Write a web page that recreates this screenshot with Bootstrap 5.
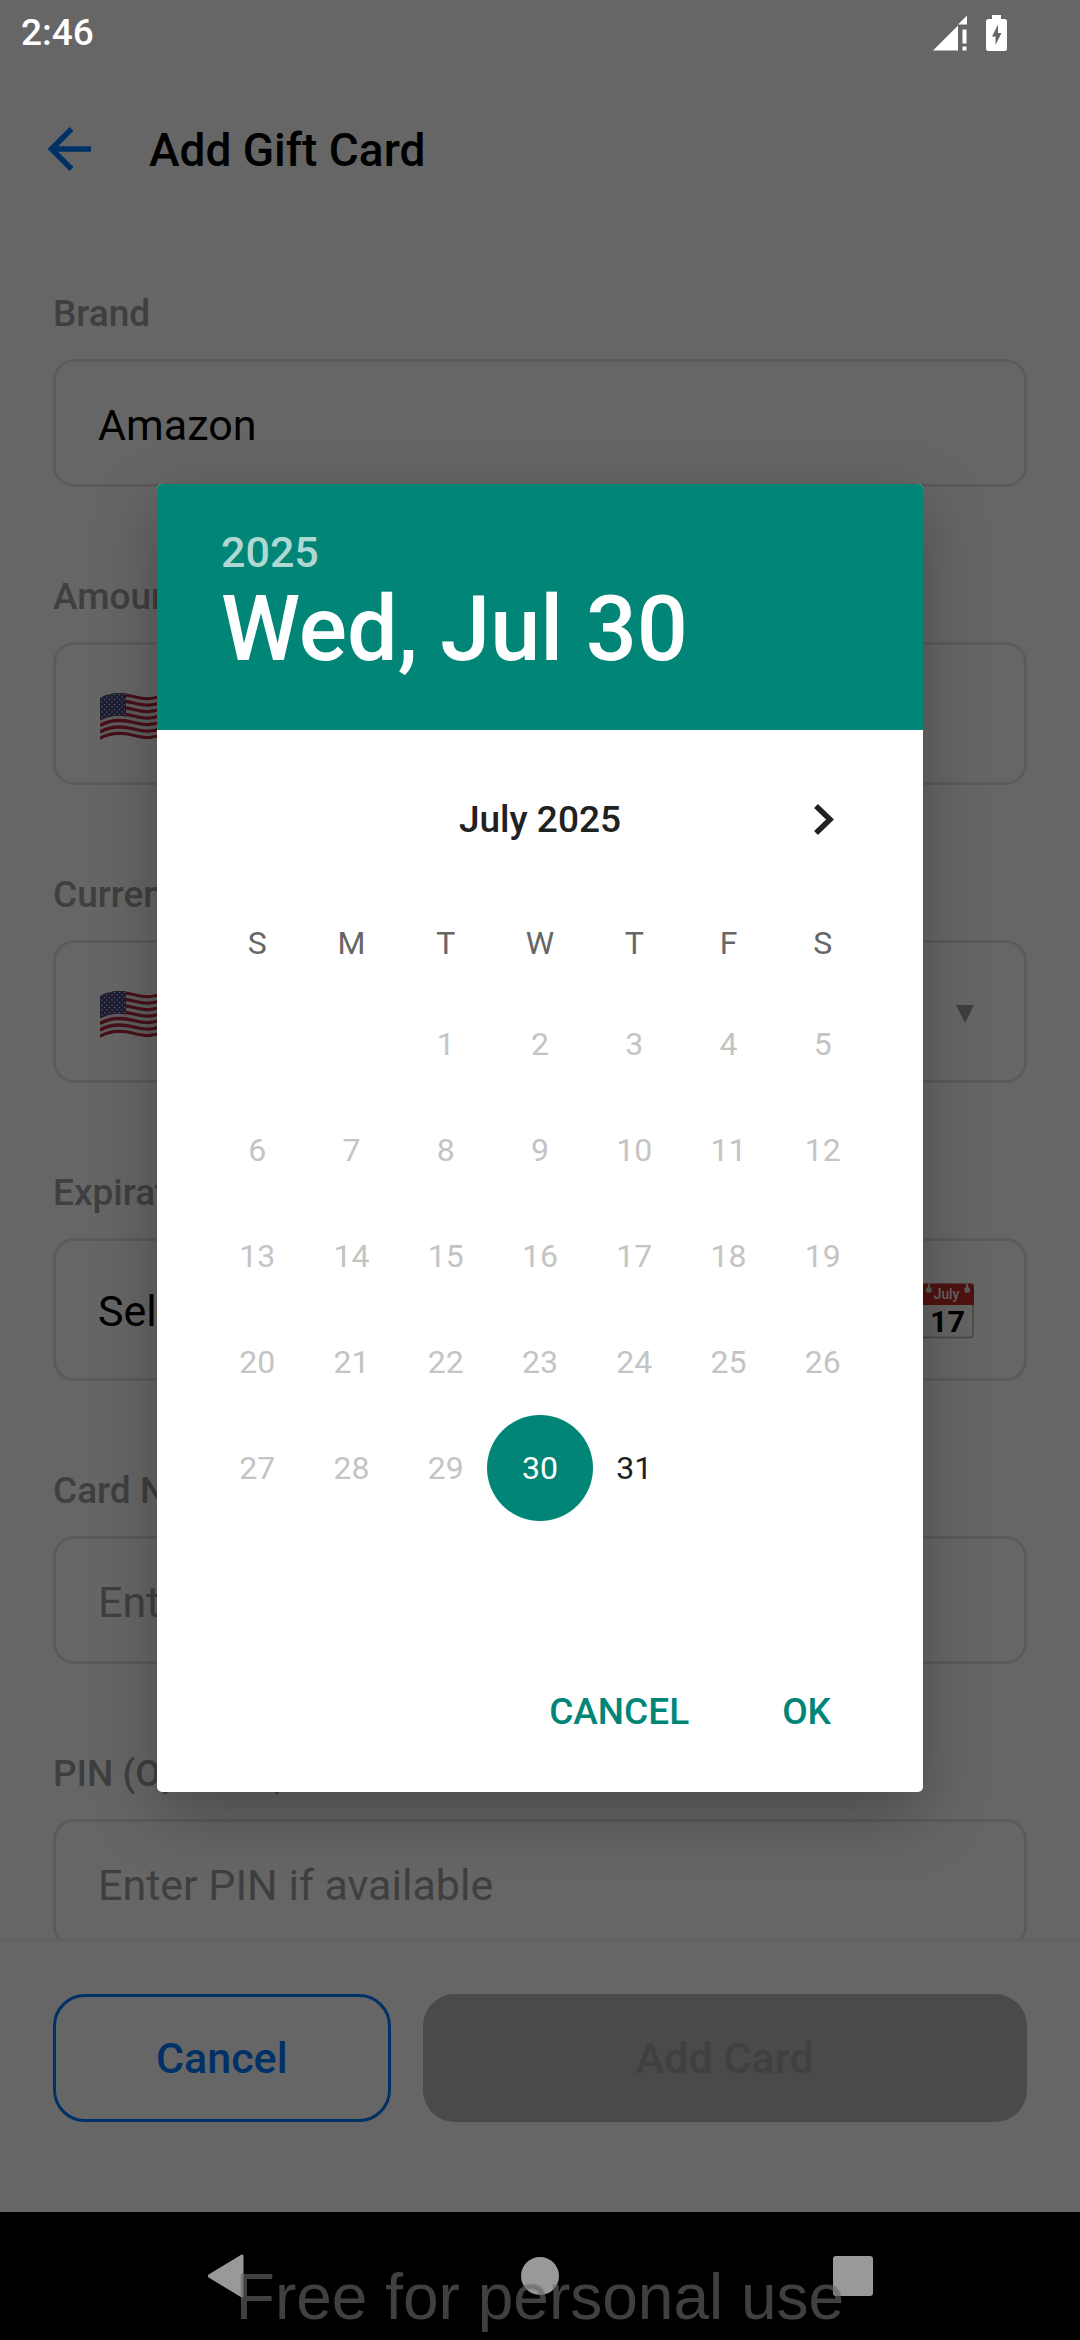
<!DOCTYPE html>
<html lang="en">
<head>
<meta charset="utf-8">
<meta name="viewport" content="width=device-width, initial-scale=1">
<title>Add Gift Card</title>
<link href="https://cdn.jsdelivr.net/npm/bootstrap@5.3.0/dist/css/bootstrap.min.css" rel="stylesheet">
<style>
  :root { --teal: #008577; --ink: #212121; --blue: #007aff; --muted: #9e9e9e; --line: #e4e4e4; }
  body { font-family: Roboto, "Noto Sans", sans-serif; color: #000; background: #fff; }
  button { font-family: inherit; }
  .screen { height: 100vh; }
  .fw-mid { font-weight: 500; }

  .status-bar { height: 66px; padding: 0 73px 0 21px; z-index: 3; font-size: 37px; line-height: 44px; }
  .status-icons { gap: 19px; }
  .top-bar { height: 168px; padding: 0 48px; gap: 58px; }
  .top-bar h1 { font-size: 46px; line-height: 56px; }

  .form-area { flex: 1 1 0; min-height: 0; padding: 56px 53px 0; }
  .field { margin-bottom: 86px; }
  .field > label { display: block; font-size: 37px; line-height: 48px; margin-bottom: 21px; color: var(--muted); font-weight: 500; }
  .box { height: 128px; border: 3px solid var(--line); border-radius: 21px; padding: 3px 42px 0; font-size: 43px; line-height: 50px; background: #fff; color: #000; }
  .box-tall { height: 143px; }
  .box input, .box select { border: 0; outline: 0; padding: 0; background: none; appearance: none; color: #000; font-size: 43px; }
  input.box::placeholder, .box input::placeholder { color: var(--muted); opacity: 1; }

  .action-bar { border-top: 3px solid #f2f2f2; padding: 52px 53px 90px; gap: 32px; }
  .action { height: 128px; border-radius: 32px; font-size: 43px; line-height: 50px; font-weight: 500; padding: 0; }
  .action-cancel { flex: 333 1 0; border: 3px solid var(--blue); color: var(--blue); }
  .action-add, .action-add:disabled { flex: 607 1 0; border: 0; background: #b4b8bd; color: #a0a0a3; opacity: 1; }

  .system-nav { height: 128px; background: #000; padding: 0 70px; z-index: 3; }
  .system-nav .key { flex: 1 1 0; background: none; border: 0; padding: 0; }
  .watermark { bottom: 3px; font-family: "Liberation Sans", sans-serif; font-size: 64px; line-height: 80px; color: rgba(128,128,128,.5); pointer-events: none; text-shadow: 0 0 2px rgba(0,0,0,.3); }

  .scrim { background: rgba(0,0,0,.6); padding: 64px 0 128px; z-index: 2; }
  .picker { width: 766px; max-width: 90%; border-radius: 5px; background: #fff; box-shadow: 0 22px 66px rgba(0,0,0,.28); }
  .picker-head { background: var(--teal); color: #fff; padding: 44px 64px 48px; }
  .picker-year { font-size: 43px; line-height: 49px; color: rgba(255,255,255,.7); }
  .picker-date { font-size: 90px; line-height: 105px; }
  .picker-body { padding: 27px 53px 0; }
  .month-row { height: 126px; margin-bottom: 13px; color: var(--ink); font-size: 37px; line-height: 44px; }
  .next-month { right: 0; width: 94px; height: 126px; background: none; border: 0; padding: 0 0 2px 2px; color: var(--ink); }
  .days { width: 100%; table-layout: fixed; text-align: center; font-size: 32px; line-height: 38px; }
  .days th { height: 95px; padding: 0 0 2px; font-weight: 400; color: #666; }
  .days td { height: 106px; padding: 0; }
  .day { border: 0; background: none; padding: 0; width: 106px; height: 106px; border-radius: 50%; margin: 0 -6px; color: var(--ink); display: inline-block; vertical-align: top; }
  .day:disabled { color: #c4c4c4; }
  .day-on { background: var(--teal); color: #fff; }
  .picker-foot { height: 165px; padding: 4px 60px 0; gap: 29px; }
  .picker-foot button { border: 0; background: none; color: var(--teal); font-size: 37px; line-height: 44px; padding: 32px; }
</style>
<script src="https://cdn.jsdelivr.net/npm/bootstrap@5.3.0/dist/js/bootstrap.bundle.min.js"></script>
</head>
<body>
<div class="screen position-relative d-flex flex-column overflow-hidden">

  <div class="status-bar position-relative d-flex align-items-center justify-content-between text-white fw-mid flex-shrink-0">
    <span>2:46</span>
    <span class="status-icons d-flex align-items-center">
      <svg width="34" height="36" viewBox="0 0 34 36" fill="#fff" aria-hidden="true"><path d="M0 35.500 25 10.500V35.500Z"/><path d="M25 9.500 34 .5V9.500Z"/><path d="M29.500 14.500H33.500V28.500H29.500ZM29.500 31.500H33.500V35.500H29.500Z"/></svg>
      <svg width="21" height="36" viewBox="0 0 21 36" fill="#fff" fill-rule="evenodd" aria-hidden="true"><path d="M6 0H15V4H18.500Q21 4 21 6.500V33.500Q21 36 18.500 36H2.500Q0 36 0 33.500V6.500Q0 4 2.500 4H6ZM12 9.500 6 21.500H9.500V30L15.500 18H12Z"/></svg>
    </span>
  </div>

  <header class="top-bar d-flex align-items-center flex-shrink-0">
    <a href="#" class="d-flex" aria-label="Back">
      <svg width="43" height="46" viewBox="0 0 43 46" fill="none" stroke="#007aff" stroke-width="5.500"><path d="M43 22H4M23.500 2 3.500 22 23.500 42"/></svg>
    </a>
    <h1 class="fw-mid m-0">Add Gift Card</h1>
  </header>

  <main class="form-area overflow-hidden">
    <div class="field">
      <label for="brand">Brand</label>
      <input id="brand" class="box w-100" type="text" value="Amazon">
    </div>
    <div class="field">
      <label for="amount">Amount</label>
      <div class="box box-tall d-flex align-items-center gap-3">
        <svg width="66" height="52" viewBox="0 -4 66 52" aria-hidden="true">
          <defs>
            <clipPath id="flag-shape"><path d="M2 5C12-1 24-1 36 2S54 5 64 1V43C54 47 46 47 36 44S12 41 2 47Z"/></clipPath>
            <pattern id="stars" width="5" height="5" patternUnits="userSpaceOnUse"><circle cx="1.500" cy="1.500" r=".8" fill="#dcdcea"/><circle cx="4" cy="4" r=".8" fill="#dcdcea"/></pattern>
            <g id="flag" clip-path="url(#flag-shape)">
              <rect width="66" height="48" fill="#eee"/>
              <g fill="none" stroke="#b5263a" stroke-width="3.300">
                <path id="stripe" d="M2 6.500C12 .5 24 .5 36 3.500S54 6.500 64 2.500"/>
                <use href="#stripe" y="6.500"/><use href="#stripe" y="13"/><use href="#stripe" y="19.500"/><use href="#stripe" y="26"/><use href="#stripe" y="32.500"/><use href="#stripe" y="39"/>
              </g>
              <path d="M2 0H28V23.500C18 21.500 10 23 2 27Z" fill="#46467f"/>
              <path d="M2 0H28V23.500C18 21.500 10 23 2 27Z" fill="url(#stars)"/>
            </g>
          </defs>
          <use href="#flag"/>
        </svg>
        <input id="amount" class="flex-grow-1" type="text" inputmode="decimal">
      </div>
    </div>
    <div class="field">
      <label for="currency">Currency</label>
      <div class="box box-tall d-flex align-items-center gap-3">
        <svg width="66" height="52" viewBox="0 -4 66 52" aria-hidden="true"><use href="#flag"/></svg>
        <select id="currency" class="flex-grow-1"><option value="USD">USD</option></select>
        <svg class="me-2" width="18" height="20" viewBox="0 -2 18 20" fill="#9e9e9e" aria-hidden="true"><path d="M0 0H18L9 18Z"/></svg>
      </div>
    </div>
    <div class="field">
      <label for="expires">Expiration Date</label>
      <button id="expires" type="button" class="box box-tall w-100 d-flex align-items-center justify-content-between">
        <span>Select date</span>
        <svg class="me-2" width="53" height="56" viewBox="0 0 54 56" aria-hidden="true">
          <rect x="1" y="1" width="52" height="54" rx="3" fill="#fafafa" stroke="#b0b0b0" stroke-width="1.500"/>
          <path d="M0 22V3Q0 0 3 0H51Q54 0 54 3V22Z" fill="#c62f28"/>
          <path d="M8 0V5M47 0V5" stroke="#e0e0e0" stroke-width="2"/>
          <circle cx="8" cy="6.500" r="3" fill="#e0e0e0"/><circle cx="47" cy="6.500" r="3" fill="#e0e0e0"/>
          <text x="26" y="16" font-size="14" font-weight="500" text-anchor="middle" fill="#fff">July</text>
          <text x="27" y="49" font-size="31" font-weight="700" text-anchor="middle" fill="#000">17</text>
        </svg>
      </button>
    </div>
    <div class="field">
      <label for="number">Card Number</label>
      <input id="number" class="box w-100" type="text" placeholder="Enter card number">
    </div>
    <div class="field">
      <label for="pin">PIN (Optional)</label>
      <input id="pin" class="box w-100" type="text" placeholder="Enter PIN if available">
    </div>
  </main>

  <footer class="action-bar d-flex flex-shrink-0">
    <button type="button" class="btn action action-cancel">Cancel</button>
    <button type="button" class="btn action action-add" disabled>Add Card</button>
  </footer>

  <nav class="system-nav position-relative d-flex flex-shrink-0" aria-label="System">
    <button type="button" class="key" aria-label="Back"><svg width="38" height="44" viewBox="0 0 38 44"><path d="M1 22 34 2V42Z" fill="#999" stroke="#999" stroke-width="3" stroke-linejoin="round"/></svg></button>
    <button type="button" class="key" aria-label="Home"><svg width="38" height="38"><circle cx="19" cy="19" r="19" fill="#999"/></svg></button>
    <button type="button" class="key" aria-label="Recent apps"><svg width="40" height="40"><rect width="40" height="40" rx="3" fill="#999"/></svg></button>
    <div class="watermark position-absolute start-0 end-0 text-center text-nowrap">Free for personal use</div>
  </nav>

  <div class="scrim position-absolute top-0 start-0 w-100 h-100 d-flex align-items-center justify-content-center">
    <section class="picker overflow-hidden" role="dialog" aria-label="Choose date">
      <div class="picker-head fw-mid">
        <div class="picker-year">2025</div>
        <div class="picker-date text-nowrap">Wed, Jul 30</div>
      </div>
      <div class="picker-body">
        <div class="month-row position-relative d-flex align-items-center justify-content-center fw-mid">
          <span>July 2025</span>
          <button type="button" class="next-month position-absolute d-flex align-items-center justify-content-center" aria-label="Next month"><svg width="20" height="33" viewBox="0 0 20 33" fill="none" stroke="currentColor" stroke-width="5.500"><path d="M2 3 16 16.500 2 30"/></svg></button>
        </div>
        <table class="days">
          <thead><tr><th>S</th><th>M</th><th>T</th><th>W</th><th>T</th><th>F</th><th>S</th></tr></thead>
          <tbody id="weeks"></tbody>
        </table>
      </div>
      <div class="picker-foot d-flex align-items-center justify-content-end">
        <button type="button" class="fw-mid">CANCEL</button>
        <button type="button" class="fw-mid">OK</button>
      </div>
    </section>
  </div>
</div>
<script>
  // July 2025 starts on a Tuesday; six week rows keep the dialog height constant.
  const firstWeekday = 2, dayCount = 31, selected = 30;
  const weeks = document.getElementById('weeks');
  for (let w = 0; w < 6; w++) {
    const row = weeks.insertRow();
    for (let d = 0; d < 7; d++) {
      const cell = row.insertCell(), n = w * 7 + d - firstWeekday + 1;
      if (n < 1 || n > dayCount) continue;
      const b = document.createElement('button');
      b.type = 'button';
      b.className = n === selected ? 'day day-on' : 'day';
      b.disabled = n < selected;
      b.textContent = n;
      cell.append(b);
    }
  }
</script>
</body>
</html>
